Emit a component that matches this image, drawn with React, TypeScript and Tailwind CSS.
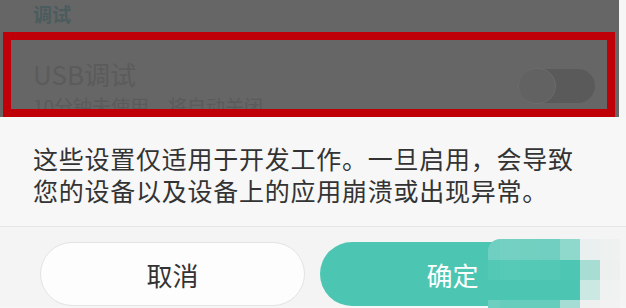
import * as React from "react";

// pixelated blur over the right part of the confirm button
const mosaicCols = [12, 20, 20, 20, 20, 20, 20];
const mosaicRows = [
  { h: 21, colors: ["#6fcfc0", "#73d0c2", "#72d0c1", "#70cfc0", "#8fd9cc", "#e9f0ef", "#eff1f1"] },
  { h: 20, colors: ["#52c8b5", "#57c9b7", "#54c9b6", "#52c8b5", "#4dc6b3", "#a8ddd4", "#eef0f0"] },
  { h: 20, colors: ["#4cc6b3", "#4cc6b3", "#4cc6b3", "#4cc6b3", "#4cc6b3", "#cce8e3", "#f0f1f1"] },
  { h: 8, colors: ["#6ccfbf", "#66ccbc", "#66ccbc", "#66ccbc", "#a5dcd3", "#eef0f0", "#f2f2f2"] },
];

const Mosaic = () => (
  <div className="absolute left-[488px] top-[239px] flex flex-col">
    {mosaicRows.map((row, r) => (
      <div key={r} className="flex">
        {row.colors.map((c, i) => (
          <div
            key={i}
            className={r === 0 && i === 0 ? "rounded-tl-[12px]" : ""}
            style={{ width: mosaicCols[i], height: row.h, background: c }}
          />
        ))}
      </div>
    ))}
  </div>
);

export default function App() {
  return (
    <div
      className="relative w-[626px] h-[308px] overflow-hidden bg-[#f6f6f6]"
      style={{ fontFamily: '"Noto Sans CJK SC", "Noto Sans", sans-serif' }}
    >
      {/* 背景设置页（遮罩下） */}
      <div className="w-[619px] h-[117px] bg-[#666666] flex flex-col">
        <div className="h-[32px] pl-[33px] pt-[1px] text-[19px] leading-[26px] font-bold text-[#4b5c5e]">调试</div>
        <div className="ml-[3px] w-[612px] h-[85px] border-[8px] border-[#bf0009] overflow-hidden flex items-start pl-[22px] pr-[12px]">
          <div className="flex-1 flex flex-col pt-[17px]">
            <span className="text-[26px] leading-[34px] text-[#5b5b5b]">USB调试</span>
            <span className="mt-[3px] text-[19px] leading-[24px] text-[#5b5b5b]">10分钟未使用，将自动关闭</span>
          </div>
          <div className="mt-[29px] w-[77px] h-[34px] rounded-full bg-[#5a5a5a] flex items-center">
            <div className="w-[38px] h-[36px] rounded-full bg-[#626262] border border-[#6c6c6c]" />
          </div>
        </div>
      </div>

      {/* 对话框 */}
      <div className="h-[110px] bg-[#f7f7f7] border-b border-[#e5e5e5] pl-[33px] pt-[25px] flex flex-col text-[25px] leading-[32px] tracking-[0.75px] text-[#333333]">
        <div>这些设置仅适用于开发工作。一旦启用，会导致</div>
        <div>您的设备以及设备上的应用崩溃或出现异常。</div>
      </div>
      <div className="bg-[#f4f4f4] flex gap-[15px] px-[40px] pt-[15px]">
        <button className="w-[265px] h-[64px] rounded-full bg-[#fdfdfd] border border-[#e3e3e3] text-[26px] text-[#333333]">
          取消
        </button>
        <button className="w-[265px] h-[64px] rounded-full bg-[#4cc6b3] text-[26px] text-white">
          确定
        </button>
      </div>

      <Mosaic />
    </div>
  );
}
